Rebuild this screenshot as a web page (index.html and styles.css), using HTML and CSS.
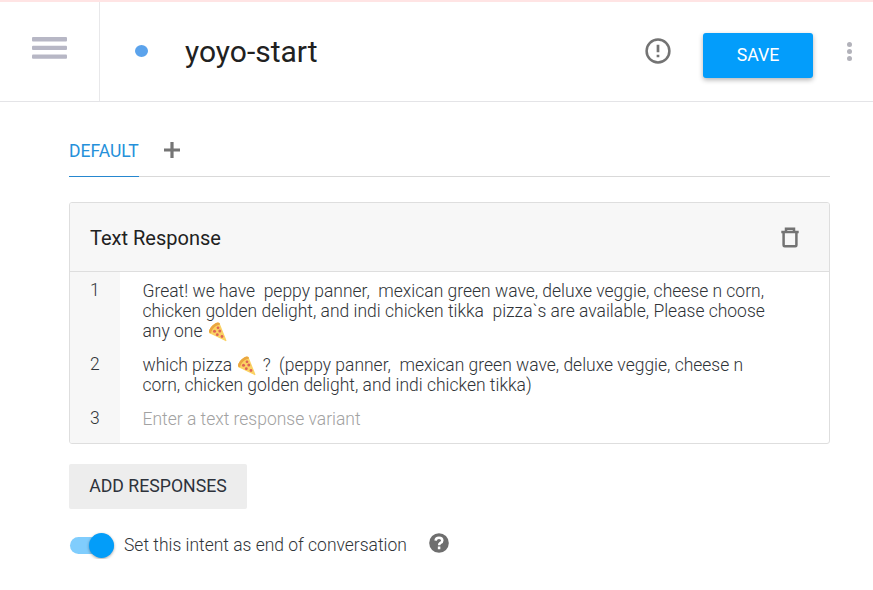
FILE: index.html
```html
<!DOCTYPE html>
<html lang="en">
<head>
<meta charset="utf-8">
<title>yoyo-start</title>
<link rel="stylesheet" href="styles.css">
</head>
<body>
<svg class="defs" width="0" height="0" aria-hidden="true">
  <symbol id="pizza" viewBox="0 0 20 20">
    <path d="M1 9 C2 5 7 .5 10 .5 Q12 .5 12.300 3 L18.500 18.500 Q18 19.600 17 18.800 L3 12 Q0.600 11.500 1 9Z" fill="#fbd264"/>
    <path d="M1 9 C2 5 7 .5 10 .5 Q12.200 .5 12 2.600 C8 3.500 4.200 6.500 3.100 10.900 Q0.600 11.300 1 9Z" fill="#eaa640"/>
    <g fill="#de6455"><circle cx="10" cy="5.800" r="1.400"/><circle cx="6.500" cy="9.300" r="1.500"/><circle cx="11.800" cy="9" r="1.500"/><circle cx="9.300" cy="12.700" r="1.400"/><circle cx="14" cy="14.500" r="1.400"/></g>
  </symbol>
</svg>
<header class="topbar">
  <button class="menu" aria-label="Menu"><svg width="35" height="23" viewBox="0 0 35 23" fill="#b7b7c5"><rect width="35" height="4.400" rx="1"/><rect y="8.700" width="35" height="4.400" rx="1"/><rect y="17.400" width="35" height="4.400" rx="1"/></svg></button>
  <span class="status"></span>
  <h1>yoyo-start</h1>
  <svg class="alert" viewBox="0 0 26 26"><circle cx="13" cy="13" r="11.400" fill="none" stroke="#737373" stroke-width="2.500"/><path d="M13 6.800V14.300M13 16.700V19.200" stroke="#737373" stroke-width="2.700"/></svg>
  <button class="save">SAVE</button>
  <div class="more"><i></i><i></i><i></i></div>
</header>
<main>
  <nav class="tabs">
    <span class="tab">DEFAULT</span>
    <svg class="plus" viewBox="0 0 16 16"><path d="M8 0V16M0 8H16" stroke="#757575" stroke-width="3.200"/></svg>
  </nav>
  <section class="card">
    <div class="card-head">
      <h2>Text Response</h2>
      <svg class="trash" viewBox="0 0 18 21"><path d="M2.600 5V18.200Q2.600 19.200 3.600 19.200H14.400Q15.400 19.200 15.400 18.200V5M0.300 5H17.700M5 4.500V1.700H13V4.500" fill="none" stroke="#737373" stroke-width="2.500"/></svg>
    </div>
    <div class="row first"><span class="num">1</span><p><span>Great! we have  peppy panner,  mexican green wave, deluxe veggie, cheese n corn,</span><br><span>chicken golden delight, and indi chicken tikka  pizza`s are available, Please choose</span><br><span>any one <svg class="pizza"><use href="#pizza"/></svg></span></p></div>
    <div class="row second"><span class="num">2</span><p><span>which pizza <svg class="pizza"><use href="#pizza"/></svg> ?  (peppy panner,  mexican green wave, deluxe veggie, cheese n</span><br><span>corn, chicken golden delight, and indi chicken tikka)</span></p></div>
    <div class="row third"><span class="num">3</span><p class="hint">Enter a text response variant</p></div>
  </section>
  <button class="add">ADD RESPONSES</button>
  <div class="end">
    <span class="switch"><i></i></span>
    <span class="label">Set this intent as end of conversation</span>
    <svg class="help" viewBox="0 0 20 20"><circle cx="10" cy="10" r="9.800" fill="#6e6e6e"/><path d="M6.600 7.600Q6.800 4.700 10 4.700Q13.300 4.700 13.300 7.500Q13.300 9 11.500 9.900Q10.100 10.700 10.100 12.200M10.100 13.600V16.200" fill="none" stroke="#fff" stroke-width="2.500"/></svg>
  </div>
</main>
</body>
</html>
```
FILE: styles.css
```css
* { box-sizing: border-box; }
body { margin: 0; background: #fff; color: #212121; font-family: Roboto, "Liberation Sans", sans-serif; overflow: hidden; }
.defs { position: absolute; }
h1, h2, p { margin: 0; font-weight: 400; }
button { border: 0; padding: 0; font: inherit; }
svg { display: block; flex: none; }
.topbar { display: flex; height: 102px; border-top: 2px solid #ffe4e4; border-bottom: 1px solid #e4e4e7; }
.menu { width: 100px; flex: none; background: none; border-right: 1px solid #e8e8ea; padding: 35px 0 0 32px; display: flex; align-items: flex-start; }
.status { width: 13px; height: 12px; border-radius: 50%; background: #5ba3ec; margin: 43px 0 0 35px; }
h1 { font-size: 30px; line-height: 36px; margin: 32px 0 0 37px; white-space: nowrap; width: 460px; }
.alert { width: 26px; height: 26px; margin-top: 36px; }
.save { width: 110px; height: 45px; margin: 31px 0 0 32px; padding-bottom: 2px; border-radius: 3px; background: #039dfb; color: #fff; font-size: 17.700px; box-shadow: 0 2px 5px rgba(0,0,0,.3); }
.more { margin: 40px 0 0 34px; display: flex; flex-direction: column; gap: 2px; }
.more i { width: 5px; height: 5px; border-radius: 50%; background: #b2b2ba; }
main { width: 761px; margin-left: 69px; padding-top: 25px; }
.tabs { display: flex; height: 50px; border-bottom: 1px solid #d9d9d9; }
.tab { width: 70px; height: 50px; line-height: 48px; border-bottom: 1px solid #2687cf; color: #2590da; font-size: 17.5px; }
.plus { width: 16px; height: 16px; margin: 15px 0 0 25px; }
.card { height: 242px; margin-top: 25px; border: 1px solid #dedede; border-radius: 3px; overflow: hidden; }
.card-head { height: 69px; padding: 0 30px 0 20px; display: flex; align-items: center; justify-content: space-between; background: #f7f7f7; border-bottom: 1px solid #dedede; }
h2 { font-size: 20px; padding-top: 2px; }
.trash { width: 18px; height: 21px; }
.row { display: flex; font-size: 17.490px; line-height: 20px; color: #303438; }
.first { height: 83px; }
.second { height: 54px; }
.third { height: 34px; }
.num { width: 50px; flex: none; padding-left: 20px; background: #f7f7f7; font-weight: 300; }
.row p { padding-left: 22.500px; font-weight: 300; white-space: pre; }
.first .num { padding-top: 8px; }
.first p { padding-top: 9px; }
.second .num, .third .num { line-height: 18px; }
.pizza { display: inline-block; width: 20px; height: 20px; vertical-align: -1px; margin: -4px 1px; }
.hint { color: #a2a2a2; }
.add { display: block; width: 178px; height: 45px; margin-top: 20px; padding-bottom: 2px; border-radius: 2px; background: #ededed; color: #2d323b; font-size: 17.700px; }
.end { display: flex; align-items: center; margin-top: 22px; height: 28px; font-size: 17.480px; font-weight: 300; color: #303438; }
.switch { width: 44px; height: 17px; margin-left: 1px; border-radius: 9px; background: #80cdfd; display: flex; justify-content: flex-end; align-items: center; }
.switch i { width: 25px; height: 25px; flex: none; border-radius: 50%; background: #039df9; box-shadow: 0 1px 3px rgba(0,0,0,.35); }
.label { width: 283px; margin-left: 10px; white-space: nowrap; }
.help { width: 20px; height: 20px; margin: -4px 0 0 21.500px; }
```
